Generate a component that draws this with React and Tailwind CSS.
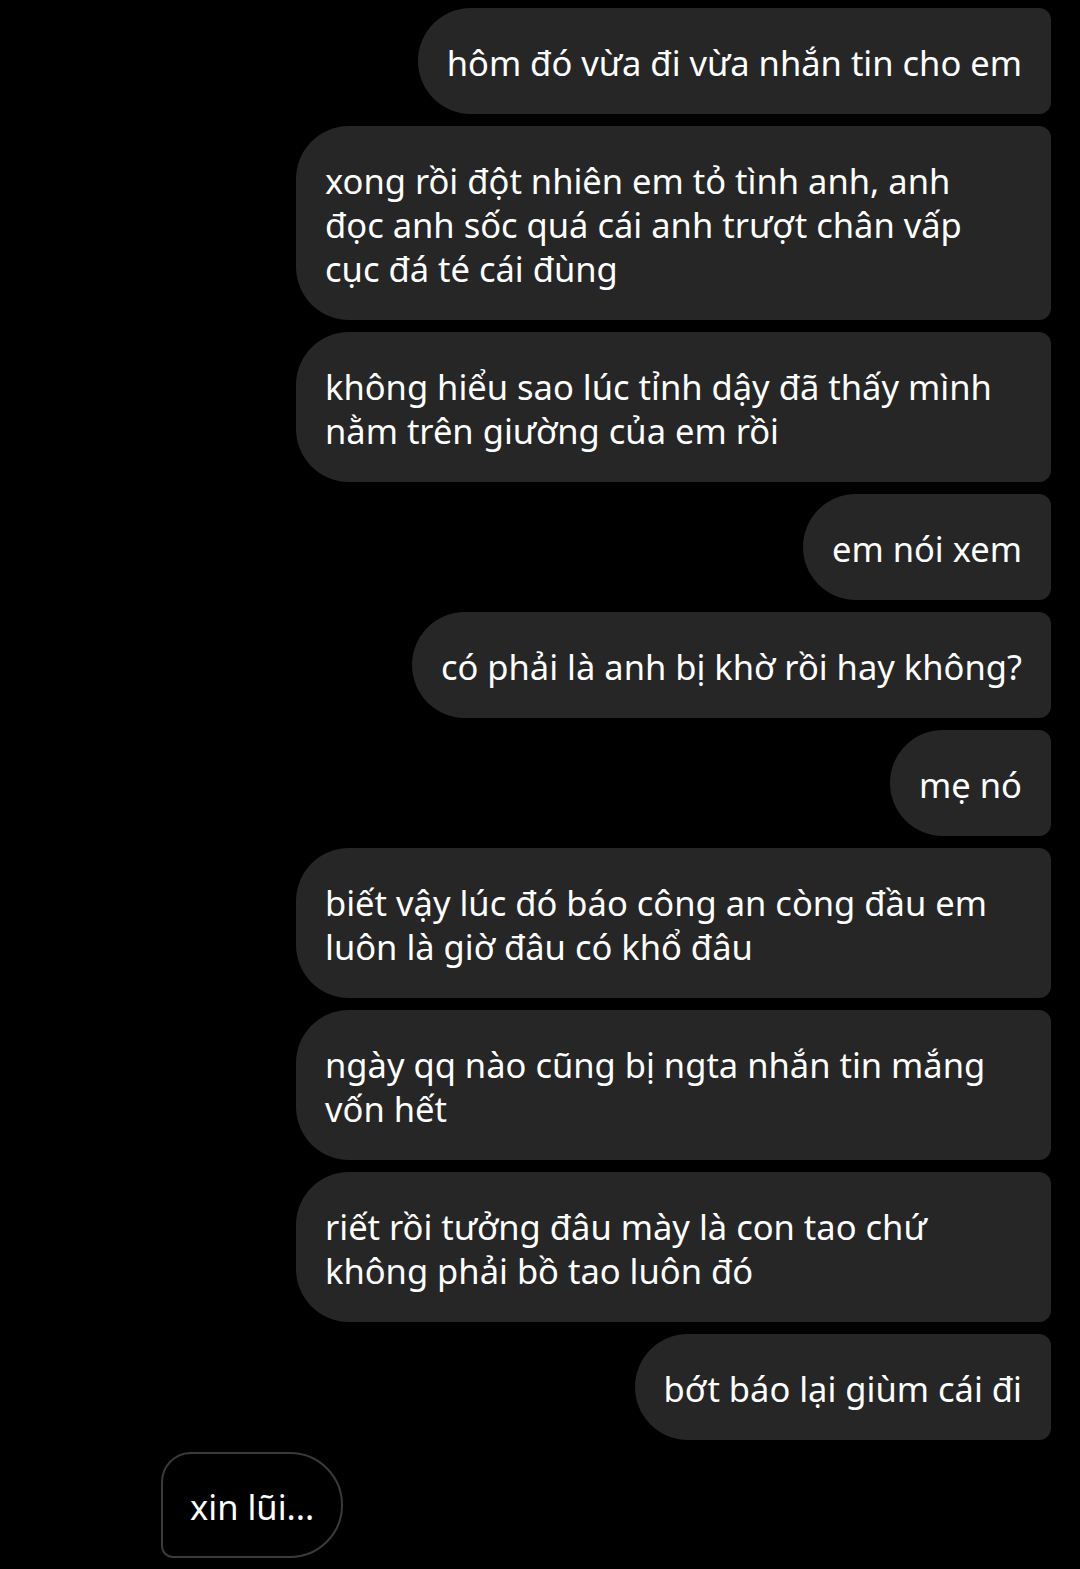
const sent = [
  ["hôm đó vừa đi vừa nhắn tin cho em"],
  ["xong rồi đột nhiên em tỏ tình anh, anh", "đọc anh sốc quá cái anh trượt chân vấp", "cục đá té cái đùng"],
  ["không hiểu sao lúc tỉnh dậy đã thấy mình", "nằm trên giường của em rồi"],
  ["em nói xem"],
  ["có phải là anh bị khờ rồi hay không?"],
  ["mẹ nó"],
  ["biết vậy lúc đó báo công an còng đầu em", "luôn là giờ đâu có khổ đâu"],
  ["ngày qq nào cũng bị ngta nhắn tin mắng", "vốn hết"],
  ["riết rồi tưởng đâu mày là con tao chứ", "không phải bồ tao luôn đó"],
  ["bớt báo lại giùm cái đi"],
];

const Bubble = ({ lines }) => {
  const multi = lines.length > 1;
  return (
    <div
      className={
        "bg-[#262626] text-white rounded-l-[53px] rounded-r-[12px] px-[29px] pt-[33px] pb-[29px] " +
        (multi ? "w-[755px]" : "")
      }
    >
      {lines.map((l, i) => (
        <div key={i} className="whitespace-nowrap">
          {l}
        </div>
      ))}
    </div>
  );
};

export default function App() {
  return (
    <div
      className="min-h-[1569px] w-[1080px] bg-black pt-[8px] pr-[29px] text-[34.5px] leading-[44px]"
      style={{ fontFamily: '"Noto Sans", "Open Sans", sans-serif' }}
    >
      <div className="flex flex-col items-end gap-[12px]">
        {sent.map((lines, i) => (
          <Bubble key={i} lines={lines} />
        ))}
      </div>
      <div className="mt-[12px] ml-[161px] flex">
        <div className="border-2 border-[#3a3a3a] text-white rounded-tl-[30px] rounded-bl-[12px] rounded-r-[53px] px-[27px] pt-[31px] pb-[27px]">
          xin lũi...
        </div>
      </div>
    </div>
  );
}
